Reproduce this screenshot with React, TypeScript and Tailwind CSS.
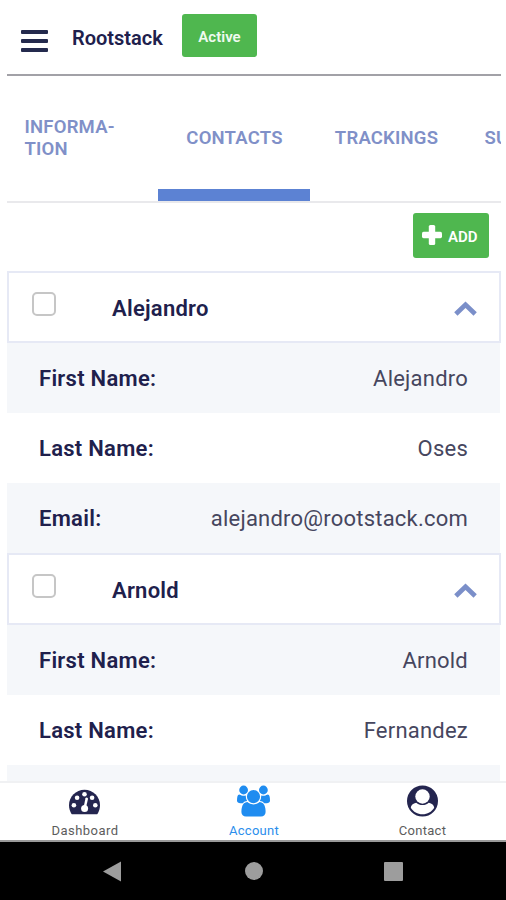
import type { ReactNode } from "react";

const USERS_PATH =
  "M529 896q-162 5-265 128h-134q-82 0-138-40.5t-56-118.5q0-353 124-353 6 0 43.5 21t97.5 42.5 119 21.5q67 0 133-23-5 37-5 66 0 139 81 256zm1071 637q0 120-73 189.5t-194 69.5h-874q-121 0-194-69.5t-73-189.5q0-53 3.5-103.5t14-109 26.5-108.5 43-97.5 62-81 85.5-53.5 111.5-20q10 0 43 21.5t73 48 107 48 135 21.5 135-21.5 107-48 73-48 43-21.5q61 0 111.5 20t85.5 53.5 62 81 43 97.5 26.5 108.5 14 109 3.5 103.5zm-1024-1277q0 106-75 181t-181 75-181-75-75-181 75-181 181-75 181 75 75 181zm704 384q0 159-112.5 271.5t-271.5 112.5-271.5-112.5-112.5-271.5 112.5-271.5 271.5-112.5 271.5 112.5 112.5 271.5zm576 225q0 78-56 118.5t-138 40.5h-134q-103-123-265-128 81-117 81-256 0-29-5-66 66 23 133 23 59 0 119-21.5t97.5-42.5 43.5-21q124 0 124 353zm-128-609q0 106-75 181t-181 75-181-75-75-181 75-181 181-75 181 75 75 181z";

function DashboardIcon() {
  return (
    <svg className="h-8 w-[31px]" viewBox="0 0 31 32" fill="white">
      <path
        fill="#24254f"
        d="M15.5 4.8C24.1 4.8 31 11.7 31 20.3C31 23.5 30.1 26.3 28.6 28.7Q28.2 29.3 27.5 29.3H3.5Q2.8 29.3 2.4 28.7C.9 26.3 0 23.5 0 20.3C0 11.7 6.9 4.8 15.5 4.8Z"
      />
      <circle cx="4.9" cy="20.3" r="2.3" />
      <circle cx="8.1" cy="12.8" r="2.3" />
      <circle cx="15.5" cy="9.3" r="2.3" />
      <circle cx="23.1" cy="12.8" r="2.3" />
      <circle cx="26.3" cy="20.3" r="2.3" />
      <path d="M17.5 12.4Q19.2 12.5 19 14L17 22.5H14.5L16.5 13.3Q16.7 12.4 17.5 12.4Z" />
      <circle cx="15.6" cy="23.5" r="3.5" />
    </svg>
  );
}

function ContactIcon() {
  return (
    <svg className="h-8 w-[31px]" viewBox="0 0 31 32" fill="white">
      <circle cx="15.5" cy="16" r="15.5" fill="#24254f" />
      <circle cx="15.5" cy="11.5" r="7.2" />
      <path d="M9.2 17.8C11 19.3 13 20.1 15.5 20.1S20 19.3 21.8 17.8C25 18.3 27 20.2 27.2 22.8C24.5 27 20.5 29.3 15.5 29.3S6.5 27 3.8 22.8C4 20.2 6 18.3 9.2 17.8Z" />
    </svg>
  );
}

function Tab({ children, active = false }: { children: ReactNode; active?: boolean }) {
  return (
    <div className="flex h-full w-[152px] shrink-0 flex-col">
      <div className="flex flex-1 items-center justify-center pt-[11px] pl-px text-[18.5px] leading-[22px] font-semibold tracking-[0.2px] text-[#8090c8]">
        {children}
      </div>
      <div className={active ? "h-3 bg-[#5c82d3]" : "h-3"} />
    </div>
  );
}

function ContactHeader({ name }: { name: string }) {
  return (
    <div className="flex h-[72px] items-center border-2 border-[#e6e9f5] bg-white pr-[22px] pl-[23px]">
      <div className="mb-[6px] size-6 shrink-0 rounded-[5px] border-2 border-[#c6c6c6] bg-white" />
      <span className="ml-[56px] flex-1 pt-[3px] text-[22px] leading-[26px] font-semibold tracking-[0.25px] text-[#20204c]">
        {name}
      </span>
      <svg className="mt-[3px] h-[15px] w-[23px]" viewBox="0 0 23 15" fill="#7b8fc9">
        <path d="M11.5 0.4 22.8 11.3 19.5 14.7 11.5 6.9 3.5 14.7.2 11.3Z" />
      </svg>
    </div>
  );
}

function Row({ label, value, shaded = false }: { label: string; value: string; shaded?: boolean }) {
  return (
    <div
      className={
        shaded
          ? "mr-px flex h-[70px] items-center justify-between bg-[#f5f7fa] pt-[2px] pr-8 pl-8"
          : "mr-px flex h-[70px] items-center justify-between bg-white pt-[2px] pr-8 pl-8"
      }
    >
      <span className="text-[22px] leading-[26px] font-semibold tracking-[0.28px] text-[#20204c]">{label}</span>
      <span className="text-[22px] leading-[26px] font-normal tracking-[0.22px] text-[#46465e]">{value}</span>
    </div>
  );
}

export default function App() {
  return (
    <div className="flex h-[900px] w-[506px] flex-col overflow-hidden bg-white font-['Roboto',sans-serif]">
      <header className="mr-[5px] ml-[7px] flex h-[76px] shrink-0 items-start border-b-2 border-[#a2a1a7]">
        <div className="mt-[30px] ml-[14px] flex w-[27px] flex-col gap-[5px]">
          <div className="h-1 rounded-[1px] bg-[#242a4d]" />
          <div className="h-1 rounded-[1px] bg-[#242a4d]" />
          <div className="h-1 rounded-[1px] bg-[#242a4d]" />
        </div>
        <h1 className="mt-[25px] ml-6 w-[110px] text-[20px] leading-[26px] font-semibold text-[#20204c]">Rootstack</h1>
        <div className="mt-[14px] flex h-[43px] w-[75px] items-center justify-center rounded-[3px] bg-[#4fb74f] pt-[3px] text-[15px] font-semibold text-[#effaef]">
          Active
        </div>
      </header>

      <nav className="mr-[5px] ml-[7px] flex h-[127px] shrink-0 overflow-hidden border-b-2 border-[#e9e9ec]">
        <div className="-ml-px flex h-full">
          <Tab>
            <span className="w-[116px]">
              INFORMA-
              <br />
              TION
            </span>
          </Tab>
          <Tab active>CONTACTS</Tab>
          <Tab>TRACKINGS</Tab>
          <Tab>
            <span className="w-[108px]">SU</span>
          </Tab>
        </div>
      </nav>

      <main className="mr-[5px] ml-[7px] flex min-h-0 flex-1 flex-col overflow-hidden">
        <div className="flex h-[68px] shrink-0 justify-end pt-[10px] pr-3">
          <button className="flex h-[45px] w-[76px] items-center rounded-[3px] bg-[#4fb74f] pl-[9px] text-white">
            <svg className="mb-px size-5" viewBox="0 0 20 20" fill="currentColor">
              <rect x="0" y="6.8" width="20" height="6.4" rx="1.6" />
              <rect x="6.8" y="0" width="6.4" height="20" rx="1.6" />
            </svg>
            <span className="ml-[6px] pt-[3px] text-[15px] font-semibold">ADD</span>
          </button>
        </div>
        <div className="shrink-0">
          <ContactHeader name="Alejandro" />
          <Row label="First Name:" value="Alejandro" shaded />
          <Row label="Last Name:" value="Oses" />
          <Row label="Email:" value="alejandro@rootstack.com" shaded />
          <ContactHeader name="Arnold" />
          <Row label="First Name:" value="Arnold" shaded />
          <Row label="Last Name:" value="Fernandez" />
          <div className="mr-px h-[70px] bg-[#f5f7fa]" />
        </div>
      </main>

      <footer className="flex h-[61px] shrink-0 border-t-2 border-b-2 border-t-[#f0f1f3] border-b-[#9a9a9a] bg-white text-[13px] leading-4">
        <div className="flex w-[169px] flex-col items-center pt-[2px] text-[#5c5c5c]">
          <DashboardIcon />
          <span className="mt-[6px] ml-px tracking-[0.45px]">Dashboard</span>
        </div>
        <div className="flex w-[169px] flex-col items-center pt-[2px] text-[#2b8eec]">
          <svg className="h-8 w-[33px]" viewBox="-64 0 1920 1792" fill="#1f8cf0">
            <path d={USERS_PATH} />
          </svg>
          <span className="mt-[6px] ml-px tracking-[0.3px]">Account</span>
        </div>
        <div className="flex w-[168px] flex-col items-center pt-[2px] text-[#5c5c5c]">
          <ContactIcon />
          <span className="mt-[6px] ml-px tracking-[0.3px]">Contact</span>
        </div>
      </footer>

      <div className="flex h-[58px] shrink-0 items-center bg-black pl-[103px]">
        <svg className="h-[21px] w-[18px]" viewBox="0 0 18 21" fill="#9d9d9d">
          <path d="M18 .5V20.5L0 10.5Z" />
        </svg>
        <div className="ml-[124px] size-[18px] rounded-full bg-[#9d9d9d]" />
        <div className="ml-[121px] size-[19px] rounded-[1px] bg-[#9d9d9d]" />
      </div>
    </div>
  );
}
